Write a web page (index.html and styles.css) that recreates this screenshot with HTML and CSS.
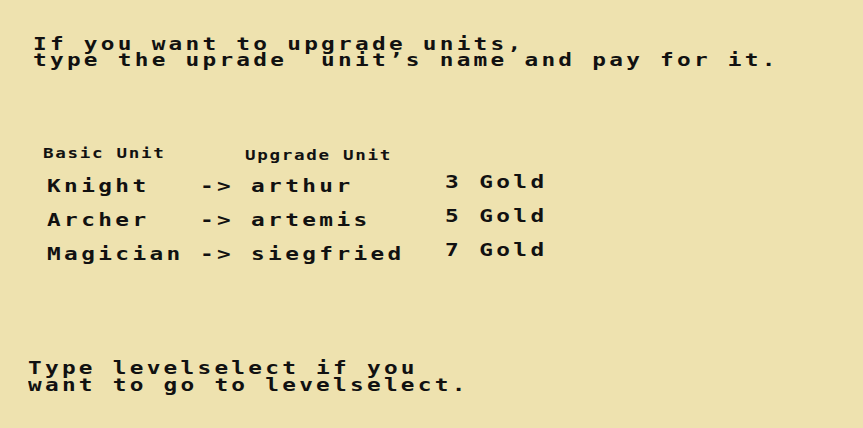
FILE: index.html
```html
<!DOCTYPE html>
<html>
<head>
<meta charset="utf-8">
<link rel="stylesheet" href="styles.css">
</head>
<body>
<div class="screen">
  <div class="intro">
    <div class="line">If you want to upgrade units,</div>
    <div class="line">type the uprade  unit’s name and pay for it.</div>
  </div>
  <div class="table">
    <div class="head">
      <span class="head-basic">Basic Unit</span>
      <span class="head-upgrade">Upgrade Unit</span>
    </div>
    <div class="row">
      <span class="name">Knight</span><span class="arrow">-&gt;</span><span class="up">arthur</span><span class="cost">3 Gold</span>
    </div>
    <div class="row">
      <span class="name">Archer</span><span class="arrow">-&gt;</span><span class="up">artemis</span><span class="cost">5 Gold</span>
    </div>
    <div class="row">
      <span class="name">Magician</span><span class="arrow">-&gt;</span><span class="up">siegfried</span><span class="cost">7 Gold</span>
    </div>
  </div>
  <div class="footer">
    <div class="line">Type levelselect if you</div>
    <div class="line">want to go to levelselect.</div>
  </div>
</div>
</body>
</html>
```

FILE: styles.css
```css
html, body {
  margin: 0;
  padding: 0;
  background: #eee2af;
}

.screen {
  width: 863px;
  height: 428px;
  overflow: hidden;
  color: #111;
  font-family: "DejaVu Sans Mono", "Liberation Mono", monospace;
  font-weight: bold;
}

.line,
.head span,
.row span {
  white-space: pre;
  transform: scaleX(1.3);
  transform-origin: left center;
}

.head span {
  display: block;
}

.intro {
  padding: 36px 0 0 33px;
  font-size: 17.5px;
  line-height: 16px;
  letter-spacing: 2.5px;
}

.table {
  margin-top: 78px;
}

.head {
  display: flex;
  align-items: flex-start;
  padding-left: 43px;
  font-size: 13.5px;
  line-height: 14px;
  letter-spacing: 1.3px;
  margin-bottom: 7px;
}

.head-basic {
  width: 202px;
  flex: none;
}

.head-upgrade {
  padding-top: 2px;
}

.row {
  display: grid;
  grid-template-columns: 153px 51px 194px auto;
  align-items: start;
  padding-left: 47px;
  font-size: 17.5px;
  line-height: 34px;
  letter-spacing: 2.6px;
}

.cost {
  margin-top: -4px;
}

.footer {
  margin-top: 89px;
  padding-left: 28px;
  font-size: 17.5px;
  line-height: 17px;
  letter-spacing: 2.5px;
}
```
